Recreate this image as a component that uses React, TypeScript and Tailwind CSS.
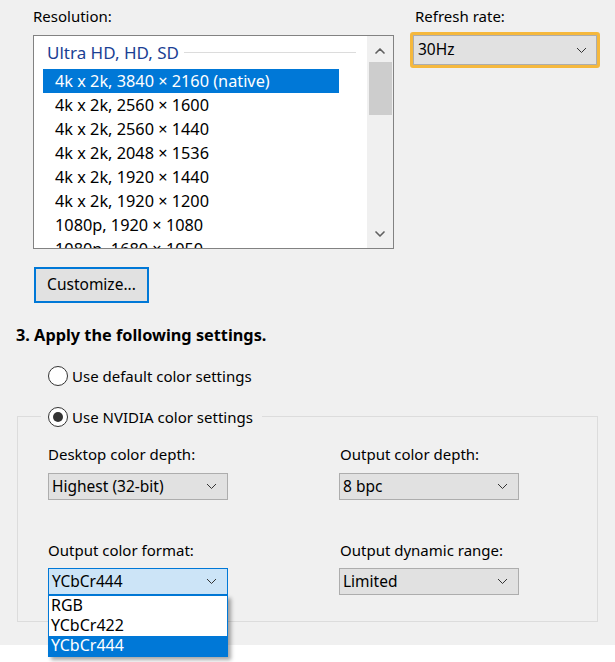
import { ChevronDown, ChevronUp } from 'lucide-react'

const resolutions = [
    '4k x 2k, 3840 × 2160 (native)',
    '4k x 2k, 2560 × 1600',
    '4k x 2k, 2560 × 1440',
    '4k x 2k, 2048 × 1536',
    '4k x 2k, 1920 × 1440',
    '4k x 2k, 1920 × 1200',
    '1080p, 1920 × 1080',
    '1080p, 1680 × 1050',
]

function Chevron() {
    return (
        <svg width="11" height="7" viewBox="0 0 11 7" className="shrink-0">
            <path d="M1 1l4.5 4.5L10 1" fill="none" stroke="#333" strokeWidth="1" />
        </svg>
    )
}

function Select({ value, active }: { value: string; active?: boolean }) {
    return (
        <div
            className={`flex h-[27px] w-[180px] items-center justify-between border pl-[3px] pr-[10px] text-[15.5px] ${
                active ? 'border-[#0078d7] bg-[#cce4f7]' : 'border-[#adadad] bg-[#e1e1e1]'
            }`}
        >
            <span>{value}</span>
            <Chevron />
        </div>
    )
}

function Radio({ checked }: { checked?: boolean }) {
    return (
        <span className="flex h-[20px] w-[20px] items-center justify-center rounded-full border border-[#333] bg-white">
            {checked && <span className="h-[10px] w-[10px] rounded-full bg-[#333]" />}
        </span>
    )
}

export default function App() {
    return (
        <div className="min-h-[662px] bg-white text-[#000] [font-family:'Noto_Sans',sans-serif]">
            <div className="h-[645px] bg-[#f0f0f0] pt-[5px]">
                {/* Resolution + refresh rate */}
                <div className="flex pl-[33px]">
                    <div className="w-[361px]">
                        <div className="text-[15px] leading-[22px]">Resolution:</div>
                        <div className="mt-[8px] flex h-[214px] border border-[#828282] bg-white">
                            <div className="flex-1 overflow-hidden pl-[9px] pt-[3px]">
                                <div className="mb-[3px] flex h-[27px] items-center gap-[5px] pl-[4px] text-[17px] text-[#1b3f94]">
                                    <span>Ultra HD, HD, SD</span>
                                    <span className="mr-[11px] h-px flex-1 bg-[#dcdcdc]" />
                                </div>
                                {resolutions.map((r, i) => (
                                    <div
                                        key={r}
                                        className={`w-[296px] whitespace-nowrap pl-[12px] text-[16.3px] leading-[24px] ${
                                            i === 0 ? 'bg-[#0078d7] text-white' : ''
                                        }`}
                                    >
                                        {r}
                                    </div>
                                ))}
                            </div>
                            <div className="flex w-[26px] flex-col items-center bg-[#f0f0f0]">
                                <ChevronUp className="mt-[7px] h-[16px] w-[16px] text-[#606060]" strokeWidth={2.5} />
                                <div className="mt-[3px] h-[53px] w-[23px] bg-[#cdcdcd]" />
                                <div className="flex-1" />
                                <ChevronDown className="mb-[6px] h-[16px] w-[16px] text-[#606060]" strokeWidth={2.5} />
                            </div>
                        </div>
                        <button className="mt-[18px] ml-[1px] h-[36px] w-[115px] border-2 border-[#0078d7] bg-[#e1e1e1] text-[15.5px]">
                            Customize...
                        </button>
                    </div>
                    <div className="ml-[16px]">
                        <div className="pl-[5px] text-[15px] leading-[22px]">Refresh rate:</div>
                        <div className="mt-[5px] h-[36px] w-[190px] rounded-[3px] border-[3px] border-[#f5b83d]">
                            <div className="flex h-full items-center justify-between border border-[#adadad] bg-[#e1e1e1] pl-[4px] pr-[9px] text-[15.5px]">
                                <span>30Hz</span>
                                <Chevron />
                            </div>
                        </div>
                    </div>
                </div>

                {/* Apply settings */}
                <div className="mt-[21px] pl-[16px] text-[16.3px] font-bold leading-[22px]">3. Apply the following settings.</div>
                <div className="mt-[19px] flex items-center gap-[4px] pl-[48px] text-[15px]">
                    <Radio />
                    <span>Use default color settings</span>
                </div>

                <div className="mx-[17px] mt-[28px] h-[206px] border border-[#dcdcdc]">
                    <div className="-mt-[11px] ml-[23px] flex w-fit items-center gap-[4px] bg-[#f0f0f0] pl-[7px] pr-[9px] text-[15px]">
                        <Radio checked />
                        <span>Use NVIDIA color settings</span>
                    </div>
                    <div className="mt-[15px] grid grid-cols-[291px_1fr] pl-[30px]">
                        <div>
                            <div className="text-[15px] leading-[22px]">Desktop color depth:</div>
                            <div className="mt-[8px]">
                                <Select value="Highest (32-bit)" />
                            </div>
                        </div>
                        <div>
                            <div className="pl-[1px] text-[15px] leading-[22px]">Output color depth:</div>
                            <div className="mt-[8px]">
                                <Select value="8 bpc" />
                            </div>
                        </div>
                        <div className="mt-[39px]">
                            <div className="text-[15px] leading-[22px]">Output color format:</div>
                            <div className="relative mt-[7px]">
                                <Select value="YCbCr444" active />
                                <div className="absolute left-0 top-[27px] z-10 w-[180px] border border-[#0078d7] bg-white text-[16px] shadow-[3px_3px_4px_rgba(0,0,0,0.35)]">
                                    <div className="h-[20px] pl-[2px] leading-[18px]">RGB</div>
                                    <div className="h-[20px] pl-[2px] leading-[18px]">YCbCr422</div>
                                    <div className="h-[20px] bg-[#0078d7] pl-[2px] leading-[19px] text-white">YCbCr444</div>
                                </div>
                            </div>
                        </div>
                        <div className="mt-[39px]">
                            <div className="pl-[1px] text-[15px] leading-[22px]">Output dynamic range:</div>
                            <div className="mt-[7px]">
                                <Select value="Limited" />
                            </div>
                        </div>
                    </div>
                </div>
            </div>
        </div>
    )
}
